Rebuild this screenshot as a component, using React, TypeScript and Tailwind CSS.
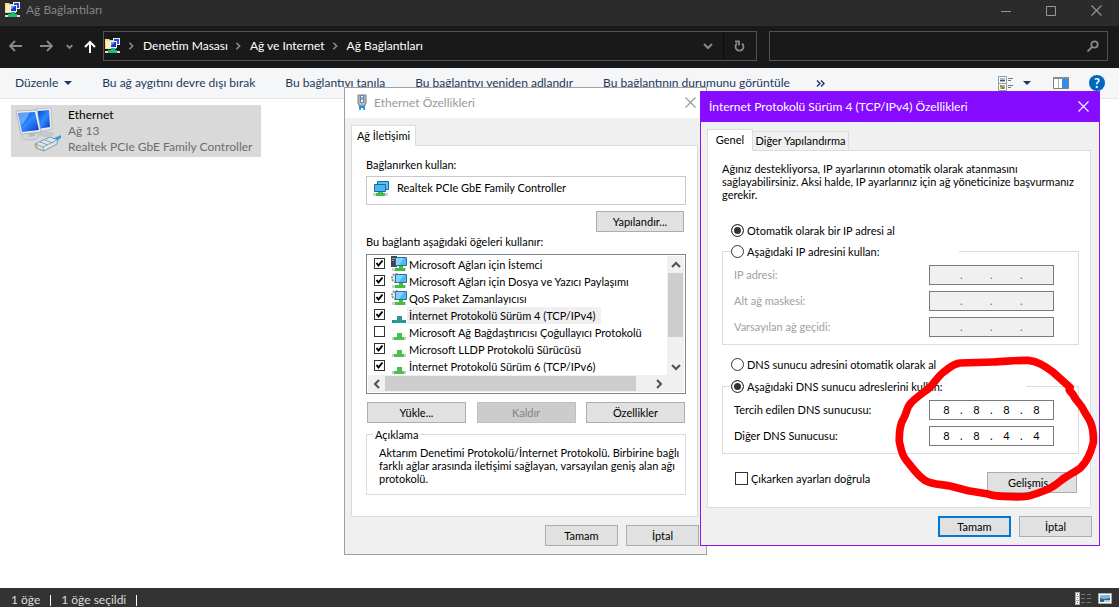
import { useState } from "react";
import type { ReactNode } from "react";

const toolbarItems = [
  "Bu ağ aygıtını devre dışı bırak",
  "Bu bağlantıyı tanıla",
  "Bu bağlantıyı yeniden adlandır",
  "Bu bağlantının durumunu görüntüle",
];

const crumbs = ["Denetim Masası", "Ağ ve Internet", "Ağ Bağlantıları"];

const protocols = [
  { name: "Microsoft Ağları için İstemci", checked: true, icon: "client" },
  { name: "Microsoft Ağları için Dosya ve Yazıcı Paylaşımı", checked: true, icon: "service" },
  { name: "QoS Paket Zamanlayıcısı", checked: true, icon: "service" },
  { name: "İnternet Protokolü Sürüm 4 (TCP/IPv4)", checked: true, icon: "protocol", selected: true },
  { name: "Microsoft Ağ Bağdaştırıcısı Çoğullayıcı Protokolü", checked: false, icon: "protocol" },
  { name: "Microsoft LLDP Protokolü Sürücüsü", checked: true, icon: "protocol" },
  { name: "İnternet Protokolü Sürüm 6 (TCP/IPv6)", checked: true, icon: "protocol" },
];

function FolderNetIcon() {
  return (
    <svg width="16" height="16" viewBox="0 0 16 16" aria-hidden="true">
      <path d="M0 1h4l1 1h6v9H0z" fill="#f5dc84" />
      <path d="M1 3h4v7H1z" fill="#fdf0b4" />
      <path d="M8 0h7v7H8z" fill="#e8edf5" />
      <path d="M9 1h5v5H9z" fill="#2b50d8" />
      <path d="M5 3h7v7H5z" fill="#e8edf5" />
      <path d="M6 4h5v5H6z" fill="#1535c0" />
      <path d="M6 4h4L6 8z" fill="#6f95f5" />
      <path d="M6 10h4v3H6z" fill="#1fb46f" />
      <path d="M0 13h15v2H0z" fill="#d8dde0" />
      <path d="M3 12h9v3H3z" fill="#16c07a" />
    </svg>
  );
}

function EthernetIcon() {
  return (
    <svg width="48" height="46" viewBox="0 0 48 46" aria-hidden="true">
      <defs>
        <linearGradient id="screen" x1="0" y1="0" x2="1" y2="1">
          <stop offset="0" stopColor="#0a44d8" />
          <stop offset="0.5" stopColor="#2f8bff" />
          <stop offset="1" stopColor="#0b35c8" />
        </linearGradient>
      </defs>
      <ellipse cx="31" cy="27" rx="8" ry="3" fill="#c3c8cc" />
      <path d="M21 2l15-1 1 21-15 3z" fill="#e9eef2" stroke="#a6adb3" strokeWidth="0.6" />
      <path d="M23 4l11-1 1 17-12 2z" fill="url(#screen)" />
      <ellipse cx="15" cy="29" rx="9" ry="4" fill="#d2d6da" stroke="#a9afb4" strokeWidth="0.6" />
      <path d="M13 23l6-1 1 7-6 1z" fill="#b4bac0" />
      <path d="M1 4l21-1 4 22-20 2z" fill="#edf1f5" stroke="#9ca4ab" strokeWidth="0.7" />
      <path d="M3 6l17-1 4 18-17 2z" fill="url(#screen)" />
      <path d="M3 6l12-1c-3 5-5 10-9 13z" fill="#8fc1ff" opacity="0.65" />
      <path d="M35 33l11-5v3l-8 5z" fill="#27a5da" />
      <path d="M20 37l15-7 8 3-1 4-13 7-8-3z" fill="#dce6ee" stroke="#718a9f" strokeWidth="0.8" />
      <path d="M20 37l8 3 14-7M28 40l1 4M25 35l8 3M30 33l8 3" fill="none" stroke="#7d93a5" strokeWidth="0.8" />
      <path d="M21 39l2 1M21 41l3 1M25 42l2 1" stroke="#c8a43c" />
    </svg>
  );
}

function PlugIcon() {
  return (
    <svg width="10" height="17" viewBox="0 0 10 17" aria-hidden="true">
      <path d="M1 1h8v9H8v2H2v-2H1z" fill="#a9bccd" stroke="#6f8396" />
      <path d="M3.500 1.500h3v7h-3z" fill="#f3f7fa" stroke="#6f8396" />
      <path d="M4.500 3h1v3h-1z" fill="#55687a" />
      <path d="M2 12h6v2H2z" fill="#2f8fc0" />
      <path d="M2 14h2v2H2zM6 14h2v2H6z" fill="#22aef0" />
    </svg>
  );
}

function AdapterIcon() {
  return (
    <svg width="17" height="16" viewBox="0 0 17 16" aria-hidden="true">
      <path d="M4.500 0.500h11v8h-11z" fill="#5cc0f7" stroke="#21699b" />
      <path d="M1.500 3.500h11v7h-11z" fill="#4cb6f5" stroke="#21699b" />
      <path d="M0 12h15v3H0z" fill="#cfd2d4" />
      <path d="M5 11h5v1h2v3H3v-3h2z" fill="#45bd45" />
    </svg>
  );
}

function ProtocolIcon({ kind, selected }: { kind: string; selected?: boolean }) {
  if (kind === "protocol") {
    return (
      <svg className="shrink-0" width="16" height="17" viewBox="0 0 16 17" aria-hidden="true">
        <path d="M1 13h14v3H1z" fill={selected ? "#2a86a8" : "#c9cdca"} />
        <path d="M6 9h5v4h2v3H3v-3h3z" fill={selected ? "#279a94" : "#4bbf4b"} />
      </svg>
    );
  }
  return (
    <svg className="shrink-0" width="16" height="17" viewBox="0 0 16 17" aria-hidden="true">
      {kind === "client" ? (
        <>
          <path d="M0 0h6v11H0z" fill="#43474b" />
          <path d="M1 2.500h3M1 4.500h2" stroke="#9ca1a5" />
        </>
      ) : (
        <circle cx="5" cy="5" r="4" fill="#e7e9ea" stroke="#8f979d" strokeWidth="2" strokeDasharray="2 1" />
      )}
      <path d="M4.500 1.500h11v8h-11z" fill="#4db8f6" stroke="#2a6f9e" />
      <path d="M5 2h8l-5 7H5z" fill="#85d2fb" />
      <path d="M1 12h14v3H1z" fill="#cdd0d0" />
      <path d="M8 10h4v2h2v3H4v-3h4z" fill="#45bd45" />
    </svg>
  );
}

function Chevron({ d, size = 10, width = 2 }: { d: string; size?: number; width?: number }) {
  return (
    <svg width={size} height={size} viewBox="0 0 10 10" fill="none" stroke="currentColor" strokeWidth={width} aria-hidden="true">
      <path d={d} />
    </svg>
  );
}

function CloseIcon() {
  return (
    <svg width="11" height="11" viewBox="0 0 11 11" fill="none" stroke="currentColor" strokeWidth="1.100" aria-hidden="true">
      <path d="M0.500 0.500l10 10M10.500 0.500l-10 10" />
    </svg>
  );
}

function Check({ label, defaultChecked }: { label: string; defaultChecked?: boolean }) {
  return (
    <span className="relative mb-[2px] flex size-[11px] shrink-0">
      <input
        type="checkbox"
        aria-label={label}
        defaultChecked={defaultChecked}
        className="peer size-[11px] appearance-none border border-[#333] bg-white"
      />
      <svg className="pointer-events-none absolute inset-0 hidden peer-checked:block" viewBox="0 0 11 11" aria-hidden="true">
        <path d="M2.500 5l2 2.500 4-5" fill="none" stroke="#000" strokeWidth="2" />
      </svg>
    </span>
  );
}

function Button({ children, className = "w-[73px]", disabled }: { children: ReactNode; className?: string; disabled?: boolean }) {
  return (
    <button
      disabled={disabled}
      className={`h-[21px] border border-[#adadad] bg-[#e1e1e1] leading-none disabled:border-[#bfbfbf] disabled:bg-[#ccc] disabled:text-[#838383] ${className}`}
    >
      {children}
    </button>
  );
}

function Radio({ name, label, checked, onChange }: { name: string; label: string; checked: boolean; onChange: () => void }) {
  return (
    <label className="flex h-[14px] items-center gap-[3px] whitespace-nowrap">
      <input
        type="radio"
        name={name}
        checked={checked}
        onChange={onChange}
        className="size-[13px] appearance-none rounded-full border border-[#333] bg-white checked:bg-[#333] checked:shadow-[inset_0_0_0_2px_white]"
      />
      {label}
    </label>
  );
}

function IpField({ label, octets, disabled }: { label: string; octets: string[]; disabled?: boolean }) {
  return (
    <div className={`flex items-center justify-between ${disabled ? "text-[#a0a0a0]" : ""}`}>
      <span className="pb-[2px]">{label}</span>
      <div
        role="group"
        aria-label={label}
        className={`flex h-5 w-[125px] items-center border border-[#7a7a7a] pb-px pl-[3px] ${disabled ? "bg-[#f0f0f0] text-[#6d6d6d]" : "bg-white"}`}
      >
        {octets.map((octet, i) => (
          <span key={i} className="flex">
            <input
              aria-label={`${label} ${i + 1}`}
              defaultValue={octet}
              disabled={disabled}
              className="w-[27px] bg-transparent text-center outline-none"
            />
            {i < 3 && <span className="w-[3px]">.</span>}
          </span>
        ))}
      </div>
    </div>
  );
}

function EthernetDialog() {
  return (
    <section className="absolute left-[344px] top-[87px] w-[363px] border border-[#a0a0a0] bg-[#f0f0f0] text-[11px] leading-[13px] text-black">
      <header className="flex h-[30px] items-center bg-white pb-[2px] pl-3 pr-[10px] text-[12px] text-[#999]">
        <PlugIcon />
        <h2 className="ml-[7px] flex-1">Ethernet Özellikleri</h2>
        <button aria-label="Kapat">
          <CloseIcon />
        </button>
      </header>
      <div className="pb-2 pl-[6px] pr-[7px] pt-[7px]">
        <div role="tablist" className="flex">
          <button role="tab" aria-selected="true" className="relative z-10 -mb-px h-[21px] w-[65px] border border-b-0 border-[#dcdcdc] bg-white pb-[2px]">
            Ağ İletişimi
          </button>
        </div>
        <div className="mr-px border border-[#dcdcdc] bg-white pb-[21px] pl-[14px] pr-[11px] pt-3">
          <label htmlFor="adapter" className="block">Bağlanırken kullan:</label>
          <div className="mt-[5px] flex h-[29px] items-start border border-[#c8c8c8] pl-[6px] pt-1">
            <AdapterIcon />
            <input id="adapter" readOnly value="Realtek PCIe GbE Family Controller" className="ml-[7px] flex-1 outline-none" />
          </div>
          <div className="mt-[6px] flex justify-end pr-[2px]">
            <Button className="w-[88px]">Yapılandır...</Button>
          </div>
          <p className="mt-[3px]">Bu bağlantı aşağıdaki öğeleri kullanır:</p>
          <div className="mt-[6px] border border-[#828790] p-px">
            <div className="flex">
              <ul className="flex-1">
                {protocols.map((p) => (
                  <li key={p.name} className="flex h-[17px] items-center overflow-hidden whitespace-nowrap pl-[6px]">
                    <Check label={p.name} defaultChecked={p.checked} />
                    <span className="ml-[6px] flex">
                      <ProtocolIcon kind={p.icon} selected={p.selected} />
                    </span>
                    <span className={`py-[2px] pl-[2px] pr-[6px] ${p.selected ? "bg-[#f0f0f0]" : ""}`}>{p.name}</span>
                  </li>
                ))}
              </ul>
              <div className="flex w-[17px] flex-col items-center bg-[#f0f0f0] text-[#505050]">
                <button aria-label="Yukarı kaydır" className="flex h-[17px] items-center"><Chevron d="M1 7l4-4 4 4" /></button>
                <span className="h-16 w-[15px] bg-[#cdcdcd]" />
                <button aria-label="Aşağı kaydır" className="mt-auto flex h-[17px] items-center"><Chevron d="M1 3l4 4 4-4" /></button>
              </div>
            </div>
            <div className="flex h-[17px] items-center bg-[#f0f0f0] pr-[20px] text-[#505050]">
              <button aria-label="Sola kaydır" className="flex w-[17px] justify-center"><Chevron d="M7 1L3 5l4 4" /></button>
              <span className="h-[15px] w-[251px] bg-[#cdcdcd]" />
              <button aria-label="Sağa kaydır" className="ml-auto"><Chevron d="M3 1l4 4-4 4" /></button>
            </div>
          </div>
          <div className="mt-2 flex justify-between px-px">
            <Button className="w-[99px]">Yükle...</Button>
            <Button className="w-[99px]" disabled>Kaldır</Button>
            <Button className="w-[99px]">Özellikler</Button>
          </div>
          <fieldset className="mt-[5px] border border-[#dcdcdc] pb-[9px] pl-3">
            <legend className="-ml-[6px] px-[2px]">Açıklama</legend>
            <p className="mt-[5px]">
              Aktarım Denetimi Protokolü/İnternet Protokolü. Birbirine bağlı farklı ağlar arasında iletişimi sağlayan, varsayılan geniş alan ağı protokolü.
            </p>
          </fieldset>
        </div>
        <div className="mt-2 flex justify-end gap-2">
          <Button>Tamam</Button>
          <Button>İptal</Button>
        </div>
      </div>
    </section>
  );
}

function Ipv4Dialog() {
  const [ipMode, setIpMode] = useState("auto");
  const [dnsMode, setDnsMode] = useState("manual");

  return (
    <section className="absolute left-[700px] top-[91px] w-[400px] border border-[#8a10f5] bg-[#f0f0f0] text-[11px] leading-[13px] text-black">
      <header className="flex h-[30px] items-center justify-between bg-[#860cff] pb-[2px] pl-2 pr-[10px] text-[12px] text-white">
        <h2>İnternet Protokolü Sürüm 4 (TCP/IPv4) Özellikleri</h2>
        <button aria-label="Kapat">
          <CloseIcon />
        </button>
      </header>
      <div className="pb-2 pl-[6px] pr-[7px] pt-[7px]">
        <div role="tablist" className="flex items-end">
          <button role="tab" aria-selected="true" className="relative z-10 -mb-px h-[22px] w-[46px] border border-b-0 border-[#dcdcdc] bg-white pb-[2px]">
            Genel
          </button>
          <button role="tab" aria-selected="false" className="h-[19px] w-24 whitespace-nowrap border border-b-0 border-l-0 border-[#dcdcdc] pb-px">
            Diğer Yapılandırma
          </button>
        </div>
        <div className="mr-px border border-[#dcdcdc] bg-white pb-[14px] pl-[14px] pr-[11px] pt-[11px]">
          <p>
            Ağınız destekliyorsa, IP ayarlarının otomatik olarak atanmasını sağlayabilirsiniz. Aksi halde, IP ayarlarınız için ağ yöneticinize başvurmanız gerekir.
          </p>
          <div className="mt-[22px] pl-[9px]">
            <Radio name="ip" label="Otomatik olarak bir IP adresi al" checked={ipMode === "auto"} onChange={() => setIpMode("auto")} />
          </div>
          <fieldset className="mt-[7px] border border-[#dcdcdc] pb-[7px]">
            <legend className="ml-2 w-[228px]">
              <Radio name="ip" label="Aşağıdaki IP adresini kullan:" checked={ipMode === "manual"} onChange={() => setIpMode("manual")} />
            </legend>
            <div className="mt-[7px] flex flex-col gap-[6px] pl-[11px] pr-6">
              <IpField label="IP adresi:" octets={["", "", "", ""]} disabled={ipMode === "auto"} />
              <IpField label="Alt ağ maskesi:" octets={["", "", "", ""]} disabled={ipMode === "auto"} />
              <IpField label="Varsayılan ağ geçidi:" octets={["", "", "", ""]} disabled={ipMode === "auto"} />
            </div>
          </fieldset>
          <div className="mt-3 pl-[9px]">
            <Radio name="dns" label="DNS sunucu adresini otomatik olarak al" checked={dnsMode === "auto"} onChange={() => setDnsMode("auto")} />
          </div>
          <fieldset className="mt-2 border border-[#dcdcdc] pb-[7px]">
            <legend className="ml-2 w-[295px]">
              <Radio name="dns" label="Aşağıdaki DNS sunucu adreslerini kullan:" checked={dnsMode === "manual"} onChange={() => setDnsMode("manual")} />
            </legend>
            <div className="mt-[7px] flex flex-col gap-[6px] pl-[11px] pr-6">
              <IpField label="Tercih edilen DNS sunucusu:" octets={["8", "8", "8", "8"]} disabled={dnsMode === "auto"} />
              <IpField label="Diğer DNS Sunucusu:" octets={["8", "8", "4", "4"]} disabled={dnsMode === "auto"} />
            </div>
          </fieldset>
          <div className="mt-[18px] flex items-start justify-between pl-[13px] pr-[2px]">
            <label className="flex items-center gap-[3px]">
              <input type="checkbox" className="size-[13px] appearance-none border border-[#333] bg-white checked:bg-[#333]" />
              Çıkarken ayarları doğrula
            </label>
            <Button className="w-[90px]">Gelişmiş...</Button>
          </div>
        </div>
        <div className="mt-2 flex justify-end gap-2">
          <button className="h-[21px] w-[73px] border-2 border-[#0078d7] bg-[#e1e1e1] leading-none">Tamam</button>
          <Button>İptal</Button>
        </div>
      </div>
      {/* red marker around the DNS fields */}
      <svg className="pointer-events-none absolute -left-px top-[248px] z-20" width="410" height="210" viewBox="0 0 1230 630" aria-hidden="true">
        <path
          d="M1110 142L1060 97C1030 76 1010 63 985 61C950 60 915 65 880 66L780 69C755 73 745 87 731 96C712 110 700 135 683 148C660 165 645 175 632 190C620 202 620 220 611 235C600 252 597 270 598 305C603 325 604 342 618 360C637 382 650 405 676 422C700 435 725 432 750 438L805 452L860 461C880 468 900 470 930 470C955 471 975 472 990 467C1020 458 1040 452 1058 440C1075 430 1085 418 1098 411C1115 400 1130 393 1143 382C1160 365 1172 340 1180 308C1181 285 1179 265 1172 248C1165 230 1155 222 1148 205C1140 190 1125 178 1120 165L1108 150"
          fill="none"
          stroke="#fe0000"
          strokeWidth="23"
          strokeLinecap="round"
          strokeLinejoin="round"
        />
      </svg>
    </section>
  );
}

export default function App() {
  return (
    <div lang="tr" className="relative flex h-screen flex-col overflow-hidden bg-white font-['Lato',sans-serif] text-[12px] leading-4">
      <header className="flex h-[26px] items-start bg-[#2b2b2b] pl-[5px] pt-[2px] text-[#868686]">
        <FolderNetIcon />
        <h1 className="ml-[5px] flex-1">Ağ Bağlantıları</h1>
        <div className="flex gap-[35px] pr-[17px] pt-[3px] text-[#999]">
          <button aria-label="Simge durumuna küçült">
            <svg width="10" height="10" viewBox="0 0 10 10" aria-hidden="true"><path d="M0 5.500h10" stroke="currentColor" /></svg>
          </button>
          <button aria-label="Ekranı kapla">
            <svg width="10" height="10" viewBox="0 0 10 10" aria-hidden="true"><path d="M0.500 0.500h9v9h-9z" fill="none" stroke="currentColor" /></svg>
          </button>
          <button aria-label="Kapat"><CloseIcon /></button>
        </div>
      </header>

      <div className="flex h-[42px] items-center bg-[#191919] pb-[2px] pl-[9px] pr-[11px] text-[#8a8a8a]">
        <button aria-label="Geri">
          <svg width="13" height="12" viewBox="0 0 13 12" fill="none" stroke="currentColor" strokeWidth="1.800" aria-hidden="true"><path d="M13 6H1.500M6 1L1 6l5 5" /></svg>
        </button>
        <button aria-label="İleri" className="ml-[18px]">
          <svg width="13" height="12" viewBox="0 0 13 12" fill="none" stroke="currentColor" strokeWidth="1.800" aria-hidden="true"><path d="M0 6h11.500M7 1l5 5-5 5" /></svg>
        </button>
        <button aria-label="Son konumlar" className="ml-[13px]"><Chevron d="M1 3l4 4 4-4" size={7} width={2.5} /></button>
        <button aria-label="Yukarı" className="ml-[11px] text-white">
          <svg width="12" height="13" viewBox="0 0 12 13" fill="none" stroke="currentColor" strokeWidth="2" aria-hidden="true"><path d="M6 13V2M1 7l5-5 5 5" /></svg>
        </button>
        <nav className="ml-[7px] flex h-[30px] flex-[650] items-center border border-[#535353] pl-px">
          <FolderNetIcon />
          {crumbs.map((c) => (
            <span key={c} className="flex items-center">
              <span className="ml-[6px] mr-2"><Chevron d="M3 1l4 4-4 4" size={8} /></span>
              <button className="text-white">{c}</button>
            </span>
          ))}
          <button aria-label="Önceki konumlar" className="ml-auto"><Chevron d="M1 3l4 4 4-4" /></button>
          <button aria-label="Yenile" className="ml-[10px] flex h-7 w-[33px] items-center justify-center border-l border-[#0d0d0d]">
            <svg width="11" height="12" viewBox="0 0 11 12" fill="none" stroke="currentColor" strokeWidth="1.800" aria-hidden="true">
              <path d="M8 3.500A4 4 0 1 1 3 3.500M1 1.500h4v4" />
            </svg>
          </button>
        </nav>
        <label className="ml-3 flex h-[30px] flex-[329] items-center border border-[#535353] pr-2">
          <input aria-label="Ara" className="w-full min-w-0 flex-1 bg-transparent px-2 text-white outline-none" />
          <svg width="12" height="12" viewBox="0 0 12 12" fill="none" stroke="currentColor" strokeWidth="1.800" aria-hidden="true">
            <circle cx="7.500" cy="4.500" r="3.200" />
            <path d="M5 7L0.500 11.500" />
          </svg>
        </label>
      </div>

      <div className="flex h-[31px] items-center gap-[30px] whitespace-nowrap border-b border-[#e5e7ea] bg-[#f5f6f8] pl-[15px] pr-[14px] text-[#1e395b]">
        <button className="flex items-center gap-[6px]">
          Düzenle
          <svg width="8" height="4" viewBox="0 0 8 4" aria-hidden="true"><path d="M0 0h8L4 4z" fill="currentColor" /></svg>
        </button>
        {toolbarItems.map((t) => (
          <button key={t}>{t}</button>
        ))}
        <button aria-label="Diğer komutlar" className="-ml-1">
          <svg width="9" height="7" viewBox="0 0 9 7" fill="none" stroke="currentColor" strokeWidth="1.400" aria-hidden="true"><path d="M1 0.500l3 3-3 3M5 0.500l3 3-3 3" /></svg>
        </button>
        <div className="ml-auto flex items-center">
          <button aria-label="Görünüm" className="flex items-center gap-[10px]">
            <svg width="15" height="15" viewBox="0 0 15 15" aria-hidden="true">
              <path d="M0.500 0.500h8v7h-8zM0.500 7.500h8v7h-8z" fill="#fff" stroke="#9a9a9a" />
              <path d="M2 2h5v4H2z" fill="#8fc3ee" />
              <path d="M2 4h5v1H2z" fill="#2a5b72" />
              <path d="M2 9h5v4H2z" fill="#9cc46a" />
              <path d="M2 9h2v2H2z" fill="#d6702c" />
              <path d="M4 11h2v2H4z" fill="#4f8f3a" />
              <path d="M10 2.500h5M10 4.500h3M10 9.500h5M10 11.500h3" stroke="#777" />
            </svg>
            <svg width="8" height="4" viewBox="0 0 8 4" aria-hidden="true"><path d="M0 0h8L4 4z" fill="currentColor" /></svg>
          </button>
          <button aria-label="Önizleme bölmesi" className="ml-[22px]">
            <svg width="16" height="12" viewBox="0 0 16 12" aria-hidden="true">
              <path d="M0.500 0.500h15v11H0.500z" fill="#fff" stroke="#7f7f7f" />
              <path d="M0 0h16v2H0z" fill="#8a8a8a" />
              <path d="M5.500 2v9" stroke="#b0b0b0" />
              <path d="M9 2h6v9H9z" fill="#2d8fe8" />
            </svg>
          </button>
          <button aria-label="Yardım" className="ml-5 size-4 rounded-full bg-[#0067c0] text-[13px] font-bold leading-4 text-white">?</button>
        </div>
      </div>

      <main className="flex-1 px-[11px] pt-[6px]">
        <button className="flex h-[52px] w-[250px] bg-[#d9d9d9] pl-1 pt-[2px] text-left text-[#6d6d6d]">
          <EthernetIcon />
          <span className="ml-[5px] flex flex-col whitespace-nowrap">
            <span className="text-black">Ethernet</span>
            <span>Ağ 13</span>
            <span>Realtek PCIe GbE Family Controller</span>
          </span>
        </button>
      </main>

      <footer className="flex h-[19px] items-center bg-[#333] pl-[11px] pr-[7px] pt-[5px] text-[#ddd]">
        <span>1 öğe</span>
        <span className="ml-[10px] h-[11px] w-px bg-white" />
        <span className="ml-[10px]">1 öğe seçildi</span>
        <span className="ml-[10px] h-[11px] w-px bg-white" />
        <div className="ml-auto flex items-center gap-[7px] pb-1">
          <button aria-label="Ayrıntılar">
            <svg width="16" height="13" viewBox="0 0 16 13" aria-hidden="true">
              <path d="M0 0h5v13H0z" fill="#aaa" />
              <path d="M1 1h3v3H1zM1 5h3v3H1zM1 9h3v3H1z" fill="#fff" />
              <path d="M2 2h1v1H2z" fill="#555" />
              <path d="M2 6h1v1H2z" fill="#2f8fcf" />
              <path d="M2 10h1v1H2z" fill="#c02020" />
              <path d="M6 2.500h4M12 2.500h4M6 6.500h4M12 6.500h4M6 10.500h4M12 10.500h4" stroke="#777" />
            </svg>
          </button>
          <button aria-label="Büyük simgeler">
            <svg width="14" height="11" viewBox="0 0 14 11" aria-hidden="true">
              <path d="M0.500 0.500h13v10h-13z" fill="#fff" stroke="#aaa" />
              <path d="M2 2h10v7H2z" fill="#7db4ee" />
              <path d="M2 5l4 1 6-1v4H2z" fill="#2e6a6a" />
              <path d="M6 7h6v2H6z" fill="#a8cde8" />
            </svg>
          </button>
        </div>
      </footer>

      <EthernetDialog />
      <Ipv4Dialog />
    </div>
  );
}
